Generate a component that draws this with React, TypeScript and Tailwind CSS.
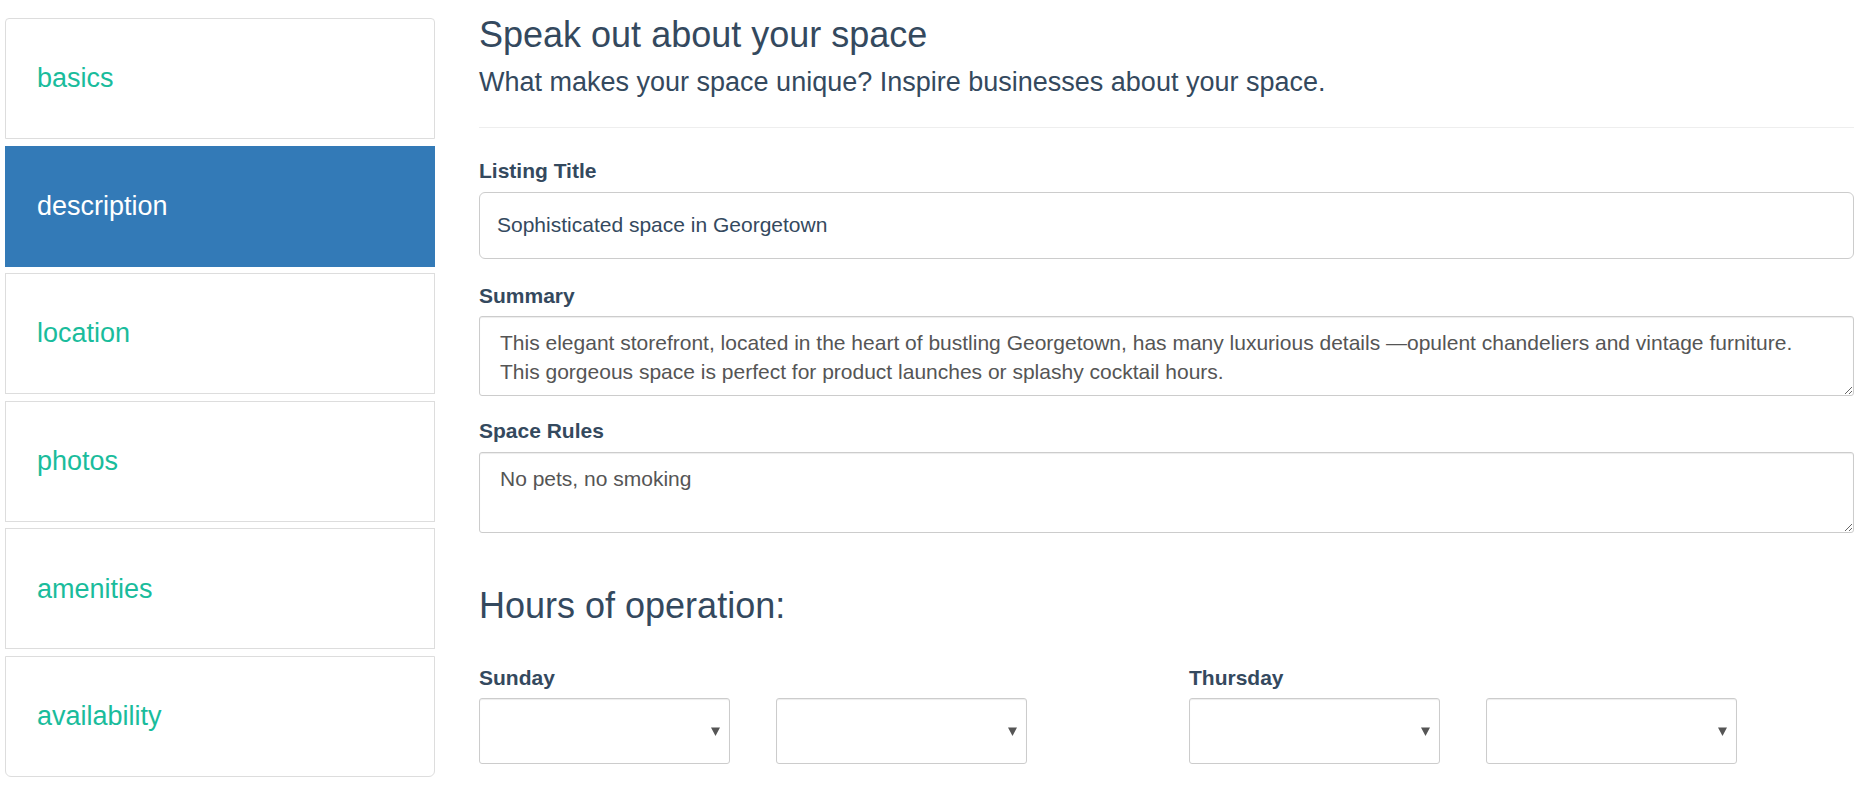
import React from "react"

const tabs = ["basics", "description", "location", "photos", "amenities", "availability"]

function SideNav({ active }: { active: string }) {
  return (
    <nav className="ml-[5px] mt-[18px] flex w-[430px] shrink-0 flex-col gap-[6.6px]">
      {tabs.map((tab, i) => {
        const isActive = tab === active
        const first = i === 0
        const last = i === tabs.length - 1
        return (
          <a
            key={tab}
            href="#"
            className={
              "flex h-[121px] items-center border pl-[31px] text-[27px] " +
              (isActive
                ? "border-[#337ab7] bg-[#337ab7] text-white"
                : "border-[#dddddd] bg-white text-[#1abc9c]") +
              (first ? " rounded-t-[4px]" : "") +
              (last ? " rounded-b-[6px]" : "")
            }
          >
            {tab}
          </a>
        )
      })}
    </nav>
  )
}

function Label({ children }: { children: React.ReactNode }) {
  return (
    <label className="mb-[8.6px] block text-[21px] font-bold leading-[24px] text-[#34495e]">
      {children}
    </label>
  )
}

function Select() {
  return (
    <div className="flex h-[66px] w-[251px] items-center justify-end rounded-[3px] border border-[#cccccc] bg-white pr-[9px] shadow-[inset_0_1px_1px_rgba(0,0,0,0.075)]">
      <svg width="9" height="9" viewBox="0 0 9 9">
        <path d="M0 0.5 H9 L4.5 9 Z" fill="#555555" />
      </svg>
    </div>
  )
}

function DayHours({ day }: { day: string }) {
  return (
    <div>
      <Label>{day}</Label>
      <div className="flex gap-[46px]">
        <Select />
        <Select />
      </div>
    </div>
  )
}

export default function App() {
  return (
    <div className="flex min-h-[787px] w-[1873px] bg-white font-['Liberation_Sans',Arial,sans-serif]">
      <SideNav active="description" />

      <main className="ml-[44px] flex w-[1375px] flex-col">
        <h2 className="mt-[15px] text-[36px] leading-[40px] text-[#34495e]">
          Speak out about your space
        </h2>
        <p className="mt-[11px] text-[27px] leading-[32px] text-[#34495e]">
          What makes your space unique? Inspire businesses about your space.
        </p>
        <hr className="mt-[29px] border-t border-[#eeeeee]" />

        <div className="mt-[31px]">
          <Label>Listing Title</Label>
          <input
            readOnly
            defaultValue="Sophisticated space in Georgetown"
            className="h-[67px] w-full rounded-[6px] border border-[#cccccc] px-[17px] text-[21px] text-[#34495e] outline-none"
          />
        </div>

        <div className="mt-[25px]">
          <Label>Summary</Label>
          <textarea
            readOnly
            defaultValue={
              "This elegant storefront, located in the heart of bustling Georgetown, has many luxurious details \u2014opulent chandeliers and vintage furniture.\nThis gorgeous space is perfect for product launches or splashy cocktail hours."
            }
            className="block h-[80px] w-full rounded-[3px] border border-[#cccccc] px-[20px] pt-[11px] text-[21px] leading-[29px] text-[#555555] shadow-[inset_0_1px_1px_rgba(0,0,0,0.075)] outline-none"
          />
        </div>

        <div className="mt-[23px]">
          <Label>Space Rules</Label>
          <textarea
            readOnly
            defaultValue="No pets, no smoking"
            className="block h-[81px] w-full rounded-[3px] border border-[#cccccc] px-[20px] pt-[11px] text-[21px] leading-[29px] text-[#555555] shadow-[inset_0_1px_1px_rgba(0,0,0,0.075)] outline-none"
          />
        </div>

        <h2 className="mt-[53px] text-[36px] leading-[40px] text-[#34495e]">Hours of operation:</h2>

        <div className="mt-[40px] grid grid-cols-[710px_1fr]">
          <DayHours day="Sunday" />
          <DayHours day="Thursday" />
        </div>
      </main>
    </div>
  )
}
